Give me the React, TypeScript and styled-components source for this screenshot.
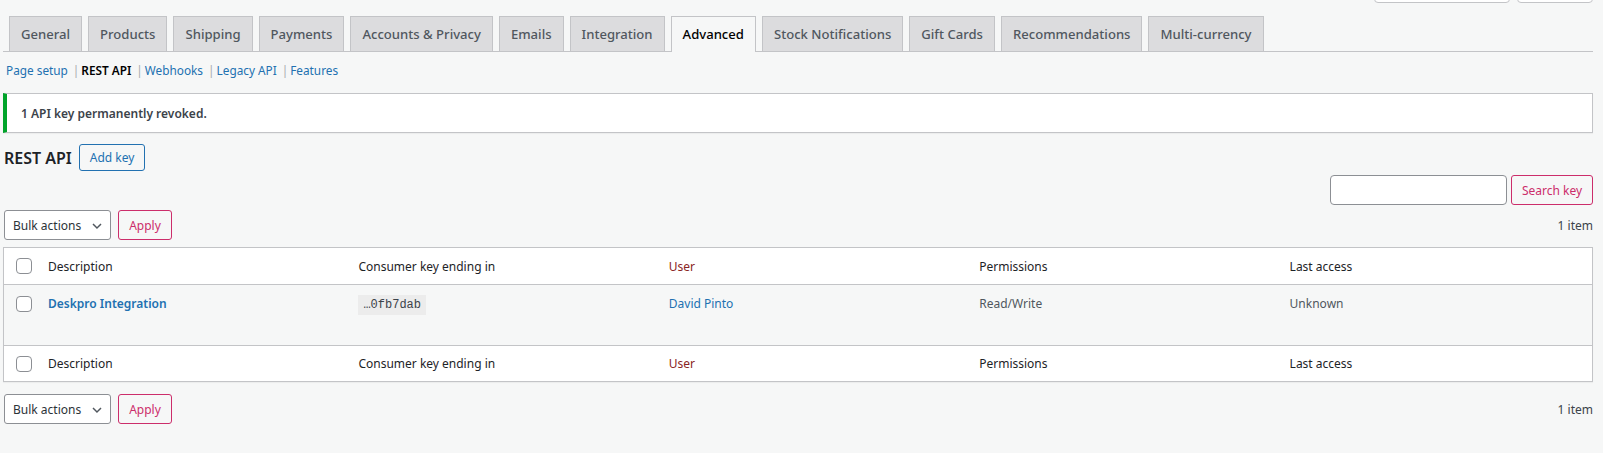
import styled, { createGlobalStyle } from 'styled-components';

const font = `'Noto Sans', 'Open Sans', sans-serif`;

const GlobalStyle = createGlobalStyle`
  body {
    margin: 0;
    background: #f6f7f7;
    font-family: ${font};
    font-size: 12px;
    color: #3c434a;
  }
`;

const tabs = [
  'General',
  'Products',
  'Shipping',
  'Payments',
  'Accounts & Privacy',
  'Emails',
  'Integration',
  'Advanced',
  'Stock Notifications',
  'Gift Cards',
  'Recommendations',
  'Multi-currency',
];

const sections = ['Page setup', 'REST API', 'Webhooks', 'Legacy API', 'Features'];

const columns = ['Description', 'Consumer key ending in', 'User', 'Permissions', 'Last access'];

const BulkActions = () => (
  <Actions>
    <Select>
      Bulk actions
      <Chevron viewBox="0 0 20 20">
        <path d="M5 7.5l5 5 5-5" fill="none" stroke="#50575e" strokeWidth="1.8" />
      </Chevron>
    </Select>
    <PinkButton $w={54}>Apply</PinkButton>
  </Actions>
);

const App = () => {
  return (
    <>
      <GlobalStyle />
      <Wrap>
        <TopStubs>
          <Stub $w={136} />
          <Stub $w={76} />
        </TopStubs>

        <TabBar>
          {tabs.map((t) => (
            <Tab key={t} $active={t === 'Advanced'}>
              {t}
            </Tab>
          ))}
        </TabBar>

        <SubNav>
          {sections.map((s, i) => (
            <SubItem key={s}>
              {i > 0 && <Sep>|</Sep>}
              <SubLink $current={s === 'REST API'}>{s}</SubLink>
            </SubItem>
          ))}
        </SubNav>

        <Notice>1 API key permanently revoked.</Notice>

        <HeadingRow>
          <Heading>REST API</Heading>
          <OutlineButton>Add key</OutlineButton>
        </HeadingRow>

        <SearchRow>
          <SearchInput />
          <PinkButton $w={82}>Search key</PinkButton>
        </SearchRow>

        <TableNav>
          <BulkActions />
          <Count>1 item</Count>
        </TableNav>

        <Table>
          <HeadRow>
            <CheckCell>
              <Checkbox />
            </CheckCell>
            {columns.map((c) => (
              <HeadCell key={c} $user={c === 'User'}>
                {c}
              </HeadCell>
            ))}
          </HeadRow>
          <BodyRow>
            <CheckCell $body>
              <Checkbox />
            </CheckCell>
            <Cell>
              <StrongLink>Deskpro Integration</StrongLink>
            </Cell>
            <Cell>
              <Code>…0fb7dab</Code>
            </Cell>
            <Cell>
              <UserLink>David Pinto</UserLink>
            </Cell>
            <Cell>Read/Write</Cell>
            <Cell>Unknown</Cell>
          </BodyRow>
          <HeadRow $foot>
            <CheckCell>
              <Checkbox />
            </CheckCell>
            {columns.map((c) => (
              <HeadCell key={c} $user={c === 'User'}>
                {c}
              </HeadCell>
            ))}
          </HeadRow>
        </Table>

        <TableNav $bottom>
          <BulkActions />
          <Count>1 item</Count>
        </TableNav>
      </Wrap>
    </>
  );
};

export default App;

const Wrap = styled.div`
  padding: 0 10px 30px 3px;
`;

const TopStubs = styled.div`
  display: flex;
  justify-content: flex-end;
  gap: 7px;
  height: 30px;
  margin-top: -25px;
`;

const Stub = styled.div<{ $w: number }>`
  width: ${(p) => p.$w}px;
  height: 28px;
  background: #fff;
  border: 1px solid #c3c4c7;
  border-radius: 0 0 4px 4px;
  box-sizing: border-box;
`;

const TabBar = styled.div`
  display: flex;
  align-items: flex-end;
  margin-top: 11px;
  border-bottom: 1px solid #c3c4c7;
  padding-left: 6px;
  gap: 6px;
`;

const Tab = styled.div<{ $active?: boolean }>`
  box-sizing: border-box;
  padding: 0 11px;
  display: flex;
  align-items: center;
  border: 1px solid #c3c4c7;
  border-bottom: none;
  margin-bottom: ${(p) => (p.$active ? '-1px' : '0')};
  height: ${(p) => (p.$active ? '36px' : '35px')};
  padding-bottom: ${(p) => (p.$active ? '1px' : '0')};
  background: ${(p) => (p.$active ? '#f6f7f7' : '#dcdcde')};
  color: ${(p) => (p.$active ? '#000' : '#50575e')};
  font-size: 13.1px;
  font-weight: 500;
  white-space: nowrap;
`;

const SubNav = styled.div`
  display: flex;
  align-items: center;
  height: 18px;
  margin-top: 9px;
  padding-left: 3px;
  font-size: 11.8px;
`;

const SubItem = styled.span`
  display: flex;
  align-items: center;
`;

const Sep = styled.span`
  color: #a7aaad;
  margin: 0 2px 0 5px;
`;

const SubLink = styled.span<{ $current?: boolean }>`
  color: ${(p) => (p.$current ? '#000' : '#2271b1')};
  font-weight: ${(p) => (p.$current ? 600 : 400)};
`;

const Notice = styled.div`
  margin-top: 14px;
  height: 40px;
  box-sizing: border-box;
  display: flex;
  align-items: center;
  padding: 0 12px 0 14px;
  background: #fff;
  border: 1px solid #c3c4c7;
  border-left: 4px solid #00a32a;
  box-shadow: 0 1px 1px rgba(0, 0, 0, 0.04);
  font-size: 12px;
  font-weight: 600;
  color: #3c434a;
`;

const HeadingRow = styled.div`
  display: flex;
  align-items: center;
  gap: 7px;
  margin-top: 11px;
  padding-left: 1px;
`;

const Heading = styled.h2`
  margin: 0;
  font-size: 16px;
  font-weight: 600;
  color: #1d2327;
`;

const OutlineButton = styled.div`
  height: 27px;
  box-sizing: border-box;
  padding: 0 10px;
  display: flex;
  align-items: center;
  border: 1px solid #2271b1;
  border-radius: 3px;
  color: #2271b1;
  font-size: 12px;
  background: #f6f7f7;
`;

const SearchRow = styled.div`
  display: flex;
  justify-content: flex-end;
  gap: 4px;
  margin-top: 4px;
`;

const SearchInput = styled.div`
  width: 177px;
  height: 30px;
  box-sizing: border-box;
  background: #fff;
  border: 1px solid #8c8f94;
  border-radius: 4px;
`;

const PinkButton = styled.div<{ $w: number }>`
  width: ${(p) => p.$w}px;
  height: 30px;
  box-sizing: border-box;
  display: flex;
  align-items: center;
  justify-content: center;
  border: 1px solid #cc2d6b;
  border-radius: 3px;
  color: #cc2d6b;
  background: #f6f7f7;
  font-size: 12px;
`;

const TableNav = styled.div<{ $bottom?: boolean }>`
  display: flex;
  justify-content: space-between;
  align-items: center;
  margin: ${(p) => (p.$bottom ? '12px 0 0' : '5px 0 7px')};
  padding-left: 1px;
`;

const Actions = styled.div`
  display: flex;
  gap: 7px;
`;

const Select = styled.div`
  position: relative;
  width: 107px;
  height: 30px;
  box-sizing: border-box;
  display: flex;
  align-items: center;
  padding: 0 0 0 8px;
  background: #fff;
  border: 1px solid #8c8f94;
  border-radius: 3px;
  color: #2c3338;
  font-size: 12px;
`;

const Chevron = styled.svg`
  position: absolute;
  right: 5px;
  top: 7px;
  width: 16px;
  height: 16px;
`;

const Count = styled.div`
  font-size: 12px;
  color: #3c434a;
`;

const Table = styled.div`
  background: #fff;
  border: 1px solid #c3c4c7;
  box-shadow: 0 1px 1px rgba(0, 0, 0, 0.04);
`;

const grid = `
  display: grid;
  grid-template-columns: 36px repeat(5, minmax(0, 1fr));
`;

const HeadRow = styled.div<{ $foot?: boolean }>`
  ${grid}
  height: ${(p) => (p.$foot ? '35px' : '36px')};
  align-items: center;
  border-top: ${(p) => (p.$foot ? '1px solid #c3c4c7' : 'none')};
  border-bottom: ${(p) => (p.$foot ? 'none' : '1px solid #c3c4c7')};
`;

const BodyRow = styled.div`
  ${grid}
  height: 60px;
  background: #f6f7f7;
  align-items: start;
`;

const CheckCell = styled.div<{ $body?: boolean }>`
  display: flex;
  padding-left: 12px;
  padding-top: ${(p) => (p.$body ? '11px' : '0')};
`;

const Checkbox = styled.span`
  width: 16px;
  height: 16px;
  box-sizing: border-box;
  border: 1px solid #8c8f94;
  border-radius: 4px;
  background: #fff;
`;

const HeadCell = styled.div<{ $user?: boolean }>`
  padding-left: 8px;
  font-size: 12px;
  color: ${(p) => (p.$user ? '#8a2424' : '#1d2327')};
`;

const Cell = styled.div`
  padding: 10px 0 0 8px;
  font-size: 12px;
  color: #50575e;
  line-height: 18px;
`;

const StrongLink = styled.span`
  color: #2271b1;
  font-weight: 600;
`;

const UserLink = styled.span`
  color: #2271b1;
`;

const Code = styled.span`
  display: inline-block;
  padding: 1px 5px;
  background: #ececec;
  font-family: 'Liberation Mono', monospace;
  font-size: 12px;
  color: #3c434a;
`;
